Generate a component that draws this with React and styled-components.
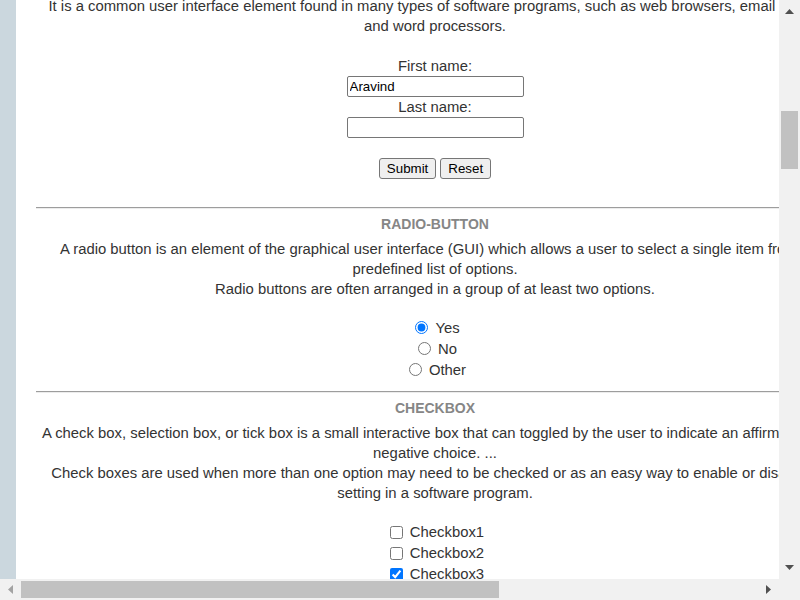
import React from "react";
import styled, { createGlobalStyle } from "styled-components";

const GlobalStyle = createGlobalStyle`
  html, body { margin: 0; padding: 0; overflow: hidden; }
  body { font-family: "Liberation Sans", Arial, sans-serif; }
`;

const Frame = styled.div`
  width: 800px;
  height: 600px;
  display: grid;
  grid-template-columns: 1fr 21px;
  grid-template-rows: 1fr 21px;
  background: #f1f1f1;
`;

const Viewport = styled.div`
  overflow: hidden;
  min-width: 0;
  min-height: 0;
  background: #cbd7de;
  padding-left: 16px;
  display: flex;
  align-items: flex-start;
`;

const Page = styled.main`
  flex: 0 0 838px;
  box-sizing: border-box;
  margin-top: -4px;
  padding: 0 20px 40px;
  background: #fff;
  color: #333;
  font-size: 14.85px;
  line-height: 20px;
  text-align: center;
`;

const Para = styled.p`
  margin: ${(p) => p.$mt || 0}px 0 0;
`;

const SectionTitle = styled.h3`
  margin: 5px 0 0;
  font-size: 14px;
  line-height: 20px;
  font-weight: bold;
  color: #868686;
`;

const Divider = styled.hr`
  margin: ${(p) => p.$mt}px 0 0;
  height: 0;
  border: 0;
  border-top: 1px solid #9d9d9d;
  border-bottom: 1px solid #ececec;
`;

const Form = styled.form`
  margin-top: 20px;
  display: flex;
  flex-direction: column;
  align-items: center;
`;

const FieldLabel = styled.label`
  display: block;
  line-height: 20px;
`;

const TextInput = styled.input`
  width: 177px;
  height: 21px;
  box-sizing: border-box;
  margin: 0;
  padding: 1px 2px;
  border: 1px solid #767676;
  border-radius: 2px;
  font-family: "Liberation Sans", Arial, sans-serif;
  font-size: 13.33px;
  color: #000;
  background: #fff;
`;

const ButtonRow = styled.div`
  margin-top: 20px;
  display: flex;
  justify-content: center;
  gap: 4px;
`;

const FormButton = styled.button`
  height: 21px;
  box-sizing: border-box;
  margin: 0;
  padding: 1px 7px;
  border: 1px solid #767676;
  border-radius: 3px;
  background: #efefef;
  color: #000;
  font-family: "Liberation Sans", Arial, sans-serif;
  font-size: 13.33px;
  line-height: 16px;
`;

const OptionList = styled.div`
  margin-top: 19px;
`;

const OptionRow = styled.label`
  height: 21px;
  line-height: 21px;
  display: flex;
  justify-content: center;
  align-items: center;
`;

const Radio = styled.input.attrs({ type: "radio" })`
  width: 13px;
  height: 13px;
  margin: -2px 7px 0 5px;
  accent-color: #0075ff;
`;

const Check = styled.input.attrs({ type: "checkbox" })`
  width: 13px;
  height: 13px;
  margin: 0 7px 0 4px;
  accent-color: #0075ff;
`;

/* scrollbars */
const VBar = styled.div`
  display: flex;
  flex-direction: column;
  background: #f1f1f1;
`;

const HBar = styled.div`
  display: flex;
  flex-direction: row;
  background: #f1f1f1;
`;

const ArrowBtn = styled.div`
  flex: 0 0 21px;
  display: flex;
  align-items: center;
  justify-content: center;
  box-sizing: border-box;
  padding: ${(p) => p.$pad || "0"};
  color: ${(p) => (p.$disabled ? "#a3a3a3" : "#505050")};
`;

const Track = styled.div`
  flex: 1;
  display: flex;
  flex-direction: ${(p) => (p.$vertical ? "column" : "row")};
  padding: ${(p) => (p.$vertical ? "0 2px" : "2px 0")};
`;

const Thumb = styled.div`
  flex: 0 0 auto;
  background: #c1c1c1;
`;

const Corner = styled.div`
  background: #f1f1f1;
`;

const Tri = ({ dir }) => {
  const pts = {
    up: "4.5,0 9,5 0,5",
    down: "0,0 9,0 4.5,5",
    left: "5,0 5,9 0,4.5",
    right: "0,0 5,4.5 0,9",
  }[dir];
  const horiz = dir === "left" || dir === "right";
  return (
    <svg width={horiz ? 5 : 9} height={horiz ? 9 : 5} viewBox={horiz ? "0 0 5 9" : "0 0 9 5"}>
      <polygon points={pts} fill="currentColor" />
    </svg>
  );
};

const scroll = { vOffset: 90, vSize: 58, hOffset: 0, hSize: 478 };

export default function App() {
  return (
    <>
      <GlobalStyle />
      <Frame>
        <Viewport>
          <Page>
            <Para>
              It is a common user interface element found in many types of software programs, such as web
              browsers, email clients and word processors.
            </Para>
            <Form onSubmit={(e) => e.preventDefault()}>
              <FieldLabel htmlFor="fname">First name:</FieldLabel>
              <TextInput id="fname" type="text" defaultValue="Aravind" />
              <FieldLabel htmlFor="lname">Last name:</FieldLabel>
              <TextInput id="lname" type="text" />
              <ButtonRow>
                <FormButton type="submit">Submit</FormButton>
                <FormButton type="reset">Reset</FormButton>
              </ButtonRow>
            </Form>
            <Divider $mt={28} />

            <SectionTitle>RADIO-BUTTON</SectionTitle>
            <Para $mt={5}>
              A radio button is an element of the graphical user interface (GUI) which allows a user to select a
              single item from a predefined list of options.
              <br />
              Radio buttons are often arranged in a group of at least two options.
            </Para>
            <OptionList>
              <OptionRow>
                <Radio name="choice" defaultChecked />
                Yes
              </OptionRow>
              <OptionRow>
                <Radio name="choice" />
                No
              </OptionRow>
              <OptionRow>
                <Radio name="choice" />
                Other
              </OptionRow>
            </OptionList>
            <Divider $mt={9.5} />

            <SectionTitle>CHECKBOX</SectionTitle>
            <Para $mt={5}>
              A check box, selection box, or tick box is a small interactive box that can toggled by the user to
              indicate an affirmative or negative choice. ...
              <br />
              Check boxes are used when more than one option may need to be checked or as an easy way to enable or
              disable a setting in a software program.
            </Para>
            <OptionList>
              <OptionRow>
                <Check />
                Checkbox1
              </OptionRow>
              <OptionRow>
                <Check />
                Checkbox2
              </OptionRow>
              <OptionRow>
                <Check defaultChecked />
                Checkbox3
              </OptionRow>
            </OptionList>
          </Page>
        </Viewport>

        <VBar>
          <ArrowBtn $pad="2px 0 0">
            <Tri dir="up" />
          </ArrowBtn>
          <Track $vertical>
            <Thumb style={{ marginTop: scroll.vOffset, height: scroll.vSize }} />
          </Track>
          <ArrowBtn $pad="0 0 3px">
            <Tri dir="down" />
          </ArrowBtn>
        </VBar>

        <HBar>
          <ArrowBtn $disabled>
            <Tri dir="left" />
          </ArrowBtn>
          <Track>
            <Thumb style={{ marginLeft: scroll.hOffset, width: scroll.hSize }} />
          </Track>
          <ArrowBtn>
            <Tri dir="right" />
          </ArrowBtn>
        </HBar>
        <Corner />
      </Frame>
    </>
  );
}
